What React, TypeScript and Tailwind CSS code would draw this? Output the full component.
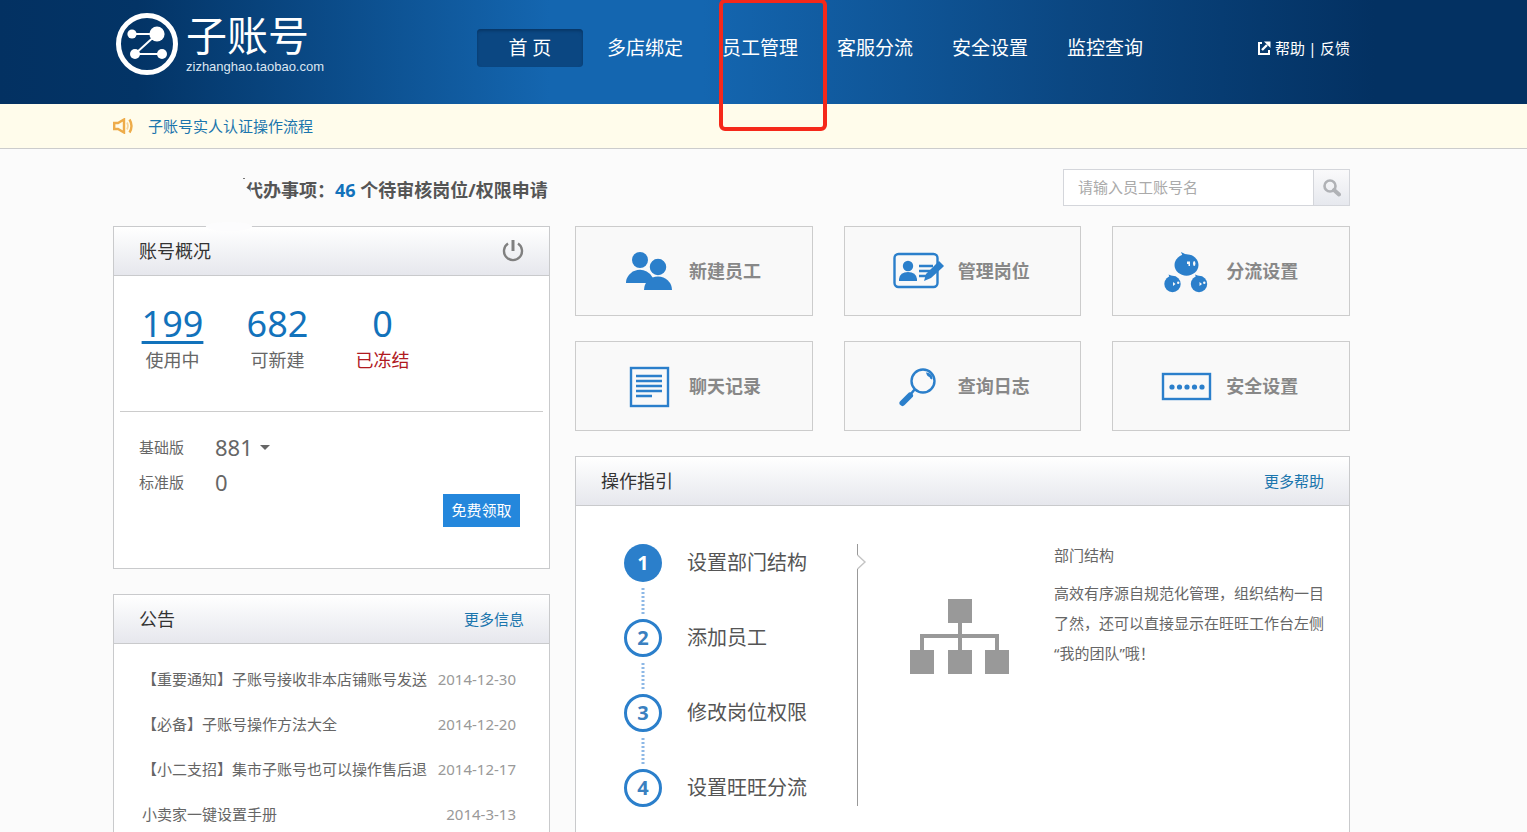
import type { ReactNode } from "react";

const BLUE = "#2b7fcb";

function LogoMark() {
  return (
    <svg viewBox="0 0 62 62" className="size-[62px] shrink-0" aria-hidden="true">
      <circle cx="31" cy="31" r="28.5" fill="none" stroke="#fff" strokeWidth="5" />
      <path d="M17 21H41L19 41H46" fill="none" stroke="#fff" strokeWidth="2" />
      <circle cx="16" cy="21" r="4.6" fill="#fff" />
      <circle cx="41" cy="21" r="7.6" fill="#fff" />
      <circle cx="19" cy="41" r="5" fill="#fff" />
      <circle cx="46" cy="41" r="5" fill="#fff" />
    </svg>
  );
}

function SpeakerIcon() {
  return (
    <svg viewBox="0 0 20 16" className="h-4 w-5 shrink-0" fill="none" stroke="#eeac4a" strokeWidth="2.4" aria-hidden="true">
      <path d="M1.2 5H5L11 1.5V14.5L5 11H1.2Z" />
      <path d="M14 4.5Q16 8 14 11.5" stroke="#f6d49c" strokeWidth="1.6" />
      <path d="M16.5 1.5Q20.5 8 16.5 14.5" />
    </svg>
  );
}

function ExternalIcon() {
  return (
    <svg viewBox="0 0 14 14" className="size-[14px] shrink-0" fill="none" stroke="#fff" strokeWidth="2" aria-hidden="true">
      <path d="M5 2H2V13H12V9" />
      <path d="M5 9L10 4" strokeWidth="2.4" />
      <path d="M7 0.5H13.5V7Z" fill="#fff" stroke="none" />
    </svg>
  );
}

function SearchIcon() {
  return (
    <svg viewBox="0 0 18 18" className="size-[18px]" fill="none" stroke="#b0b2b6" aria-hidden="true">
      <circle cx="7" cy="7" r="5.5" strokeWidth="2.6" />
      <path d="M11 11L16 15.5" strokeWidth="4" strokeLinecap="round" />
    </svg>
  );
}

function PowerIcon() {
  return (
    <svg viewBox="0 0 22 22" className="size-[22px]" fill="none" stroke="#808080" aria-hidden="true">
      <path d="M6 3.6A9 9 0 1 0 16 3.6" strokeWidth="2.4" />
      <path d="M11 0V11" strokeWidth="3" />
    </svg>
  );
}

function TileIcon({ children }: { children: ReactNode }) {
  return (
    <svg viewBox="0 0 50 50" className="size-[50px] shrink-0 overflow-visible" aria-hidden="true">
      {children}
    </svg>
  );
}

const usersIcon = (
  <TileIcon>
    <g fill={BLUE}>
      <circle cx="16" cy="14" r="8" />
      <path d="M2 37A14 13 0 0 1 29 32L30 37Z" />
      <circle cx="34" cy="21" r="9" stroke="#f9f9f9" strokeWidth="1.5" />
      <path d="M20 44A14 13.5 0 0 1 48 44Z" />
    </g>
  </TileIcon>
);

const cardIcon = (
  <TileIcon>
    <rect x="1.5" y="8" width="43" height="33" rx="4" fill="none" stroke={BLUE} strokeWidth="2.4" />
    <circle cx="15" cy="20" r="5.2" fill={BLUE} />
    <path d="M6 35V33Q7 26 15 26Q23 26 24 33V35Z" fill={BLUE} />
    <path d="M26 20H40M26 25H38M26 30H34" stroke={BLUE} strokeWidth="2.4" />
    <path d="M31 35L33 28L44 17L46 15L51 20L49 22L38 32Z" fill={BLUE} />
  </TileIcon>
);

const splitIcon = (
  <TileIcon>
    <g fill={BLUE}>
      <ellipse cx="25.5" cy="19" rx="12" ry="10.7" />
      <path d="M20 6L26 9L27 11L22 11Z" />
      <circle cx="11.5" cy="38" r="8.2" />
      <path d="M7.5 28.5L11.5 30L12 32L9 32Z" />
      <circle cx="38" cy="38" r="8.2" />
      <path d="M34 28.5L38 30L38.5 32L35.5 32Z" />
    </g>
    <g fill="#f9f9f9">
      <path d="M26 15.500h3v4.500h-1.500v-2h-1.500Z" />
      <ellipse cx="33.2" cy="17.5" rx="1.2" ry="2.6" />
      <path d="M12 36L14.500 38L12 40Z" />
      <circle cx="17.2" cy="36.8" r="1.2" />
      <path d="M38.500 36L41 38L38.500 40Z" />
      <circle cx="43.3" cy="36.8" r="1.2" />
    </g>
  </TileIcon>
);

const chatIcon = (
  <TileIcon>
    <rect x="7" y="7" width="37" height="38" fill="none" stroke={BLUE} strokeWidth="2.4" />
    <path d="M12 15H38M12 20H38M12 25H38M12 30H38M12 35H28" stroke={BLUE} strokeWidth="2.4" />
  </TileIcon>
);

const logIcon = (
  <TileIcon>
    <circle cx="30" cy="20" r="11.5" fill="none" stroke={BLUE} strokeWidth="2.4" />
    <path d="M22 28L17 34" stroke={BLUE} strokeWidth="2.5" />
    <path d="M17 34.500L9.500 42" stroke={BLUE} strokeWidth="6" strokeLinecap="round" />
    <path d="M33 11.500Q36 11 38.500 14Q40 17 39 18.500Q37 18 36.500 16Q34 15.500 33 11.500Z" fill={BLUE} />
  </TileIcon>
);

const safeIcon = (
  <TileIcon>
    <rect x="2" y="13" width="47" height="25" fill="none" stroke={BLUE} strokeWidth="2.4" />
    <g fill={BLUE}>
      <circle cx="11" cy="26" r="2.6" />
      <circle cx="18.5" cy="26" r="2.6" />
      <circle cx="26" cy="26" r="2.6" />
      <circle cx="33.5" cy="26" r="2.6" />
      <circle cx="41" cy="26" r="2.6" />
    </g>
  </TileIcon>
);

const tiles = [
  { label: "新建员工", icon: usersIcon },
  { label: "管理岗位", icon: cardIcon },
  { label: "分流设置", icon: splitIcon },
  { label: "聊天记录", icon: chatIcon },
  { label: "查询日志", icon: logIcon },
  { label: "安全设置", icon: safeIcon },
];

const navItems = ["多店绑定", "员工管理", "客服分流", "安全设置", "监控查询"];

const stats = [
  { value: "199", label: "使用中", valueClass: "underline decoration-[3px] underline-offset-4", labelClass: "text-[#666]" },
  { value: "682", label: "可新建", valueClass: "", labelClass: "text-[#666]" },
  { value: "0", label: "已冻结", valueClass: "", labelClass: "text-[#b01a1f]" },
];

const notices = [
  { title: "【重要通知】子账号接收非本店铺账号发送", date: "2014-12-30" },
  { title: "【必备】子账号操作方法大全", date: "2014-12-20" },
  { title: "【小二支招】集市子账号也可以操作售后退", date: "2014-12-17" },
  { title: "小卖家一键设置手册", date: "2014-3-13" },
];

const steps = ["设置部门结构", "添加员工", "修改岗位权限", "设置旺旺分流"];

function PanelHeader({ title, children }: { title: string; children: ReactNode }) {
  return (
    <div className="flex h-[49px] shrink-0 items-center justify-between border-b border-[#c9cacc] bg-linear-to-b from-white to-[#e6e7ed] px-[25px]">
      <h2 className="text-lg text-[#333]">{title}</h2>
      {children}
    </div>
  );
}

export default function App() {
  return (
    <div className="flex h-screen flex-col overflow-hidden bg-[#fbfbfb] font-['Noto_Sans','Noto_Sans_CJK_SC',sans-serif] text-[15px] text-[#666]">
      <header className="flex h-[104px] shrink-0 items-start bg-[linear-gradient(to_right,#033162_0%,#033466_9%,#1466b0_36%,#1466b0_46%,#0b4782_70%,#033162_90%)] pr-[177px] pl-[116px] text-white">
        <a href="#" className="flex gap-2 pt-[13px]">
          <LogoMark />
          <span className="flex flex-col">
            <span className="text-[41px] leading-[44px]">子账号</span>
            <span className="font-['Liberation_Sans',sans-serif] text-[13px] leading-5 text-[#dce6f1]">zizhanghao.taobao.com</span>
          </span>
        </a>
        <nav className="ml-auto flex items-center pt-[29px] text-[19px] leading-[38px]">
          <a href="#" className="mr-6 w-[106px] rounded bg-[#0b4782] text-center shadow-[inset_0_2px_3px_#083767]">
            首 页
          </a>
          <div className="flex gap-[39px]">
            {navItems.map((item) => (
              <a key={item} href="#" className="relative">
                {item}
                {item === "员工管理" && (
                  <span className="absolute -top-[30px] -left-[3px] z-10 h-[132px] w-[108px] rounded-md border-4 border-[#f5281a]" />
                )}
              </a>
            ))}
          </div>
        </nav>
        <div className="ml-[114px] flex items-center pt-[29px] leading-[38px]">
          <ExternalIcon />
          <a href="#" className="ml-1">帮助</a>
          <span className="w-[15px] text-center">|</span>
          <a href="#">反馈</a>
        </div>
      </header>

      <div className="flex h-[45px] shrink-0 items-center gap-[15px] border-b border-[#ccc] bg-[#fffceb] pl-[113px]">
        <SpeakerIcon />
        <a href="#" className="text-[#1a75ad]">子账号实人认证操作流程</a>
      </div>

      <main className="flex min-h-0 flex-1 flex-col pt-5 pr-[177px] pl-[113px]">
        <div className="flex h-[37px] shrink-0 items-center justify-between">
          <p className="relative pt-1 pl-[132px] text-lg font-bold text-[#555]">
            代办事项：<a href="#" className="text-[#1272bb]">46</a> 个待审核岗位/权限申请
            <span className="absolute bottom-0 left-[130px] h-[17px] w-[9px] rounded-tr-full bg-[#fbfbfb]" />
            <span className="absolute top-[6px] left-[130px] h-px w-[2px] bg-[#777]" />
          </p>
          <form className="flex h-full w-[287px] border border-[#d4d6db] bg-white">
            <input
              type="text"
              aria-label="员工账号名"
              placeholder="请输入员工账号名"
              className="min-w-0 flex-1 px-[14px] outline-none placeholder:text-[#aaa]"
            />
            <button
              type="button"
              aria-label="搜索"
              className="flex w-9 items-center justify-center border-l border-[#d4d6db] bg-linear-to-b from-[#fafafb] to-[#e6e8ee]"
            >
              <SearchIcon />
            </button>
          </form>
        </div>

        <div className="mt-5 grid min-h-0 flex-1 grid-cols-[437fr_775fr] grid-rows-1 gap-[25px]">
          <div className="flex min-h-0 flex-col gap-[25px]">
            <section className="relative flex h-[343px] shrink-0 flex-col border border-[#c9cacc] bg-white">
              <span className="absolute -top-[5px] left-[92px] h-[9px] w-[46px] rounded-[50%] bg-[#fcfcfd]" />
              <PanelHeader title="账号概况">
                <button type="button" aria-label="退出">
                  <PowerIcon />
                </button>
              </PanelHeader>
              <div className="mx-[6px] flex h-[136px] border-b border-[#ccc] pt-6">
                {stats.map((s) => (
                  <div key={s.label} className="flex w-[105px] flex-col items-center">
                    <a href="#" className={`text-4xl leading-[48px] text-[#1272bb] ${s.valueClass}`}>{s.value}</a>
                    <span className={`text-lg leading-6 ${s.labelClass}`}>{s.label}</span>
                  </div>
                ))}
              </div>
              <dl className="grid grid-cols-[76px_auto] pt-[18px] pl-[25px] leading-[35px]">
                <dt>基础版</dt>
                <dd className="flex items-center gap-[7px] text-[22px]">
                  881
                  <svg viewBox="0 0 10 5" className="h-[5px] w-[10px]" aria-hidden="true">
                    <path d="M0 0H10L5 5Z" fill="#666" />
                  </svg>
                </dd>
                <dt>标准版</dt>
                <dd className="text-[22px]">0</dd>
              </dl>
              <button type="button" className="mr-[29px] -mt-[6px] h-[33px] w-[77px] self-end bg-[#2487dc] text-white">
                免费领取
              </button>
            </section>

            <section className="flex min-h-0 flex-1 flex-col border border-b-0 border-[#c9cacc] bg-white">
              <PanelHeader title="公告">
                <a href="#" className="text-[#1a75ad]">更多信息</a>
              </PanelHeader>
              <ul className="pt-[13px] pr-[33px] pl-7 leading-[45px]">
                {notices.map((n) => (
                  <li key={n.title} className="flex justify-between">
                    <a href="#">{n.title}</a>
                    <time className="text-[#999]">{n.date}</time>
                  </li>
                ))}
              </ul>
            </section>
          </div>

          <div className="flex min-h-0 flex-col gap-[25px]">
            <div className="grid shrink-0 grid-cols-3 gap-x-[31px] gap-y-[25px]">
              {tiles.map((t) => (
                <a
                  key={t.label}
                  href="#"
                  className="flex h-[90px] items-center gap-[15px] border border-[#ccc] bg-[#f9f9f9] pl-12 text-lg font-bold text-[#888]"
                >
                  {t.icon}
                  {t.label}
                </a>
              ))}
            </div>

            <section className="flex min-h-0 flex-1 flex-col border border-b-0 border-[#c9cacc] bg-white">
              <PanelHeader title="操作指引">
                <a href="#" className="text-[#1a75ad]">更多帮助</a>
              </PanelHeader>
              <div className="flex items-start pt-[38px] pr-[25px] pl-12">
                <ol className="flex w-[233px] flex-col">
                  {steps.map((step, i) => (
                    <li key={step}>
                      {i > 0 && (
                        <svg viewBox="0 0 38 37" className="h-[37px] w-[38px]" aria-hidden="true">
                          <path d="M19 6V32" stroke="#8db8e6" strokeWidth="3" strokeDasharray="2 2" />
                        </svg>
                      )}
                      <a href="#" className="flex items-center gap-[25px] text-xl text-[#555]">
                        <span
                          className={
                            i === 0
                              ? "flex size-[38px] items-center justify-center rounded-full bg-[#2b7fcb] font-bold text-white"
                              : "flex size-[38px] items-center justify-center rounded-full border-[3px] border-[#2b7fcb] font-bold text-[#3a80c0]"
                          }
                        >
                          {i + 1}
                        </span>
                        {step}
                      </a>
                    </li>
                  ))}
                </ol>
                <svg viewBox="0 0 10 262" className="h-[262px] w-[10px] shrink-0" fill="none" aria-hidden="true">
                  <path d="M0.500 0V11M0.500 25V262" stroke="#999" />
                  <path d="M0.500 11L8 18L0.500 25" stroke="#c4c4c4" strokeWidth="1.4" />
                </svg>
                <svg viewBox="0 0 100 76" className="mt-[54px] ml-[43px] h-[76px] w-[100px] shrink-0" fill="#999" aria-hidden="true">
                  <rect x="38" y="1" width="24" height="24" />
                  <rect x="0" y="52" width="24" height="24" />
                  <rect x="38" y="52" width="24" height="24" />
                  <rect x="75" y="52" width="24" height="24" />
                  <path d="M12 52V38H87V52M50 25V52" fill="none" stroke="#999" strokeWidth="4" />
                </svg>
                <div className="ml-11 w-[270px] leading-[30px]">
                  <h3 className="mb-3 leading-[22px]">部门结构</h3>
                  <p>
                    高效有序源自规范化管理，组织结构一目了然，还可以直接显示在旺旺工作台左侧
                    <br />
                    “我的团队”哦！
                  </p>
                </div>
              </div>
            </section>
          </div>
        </div>
      </main>
    </div>
  );
}
